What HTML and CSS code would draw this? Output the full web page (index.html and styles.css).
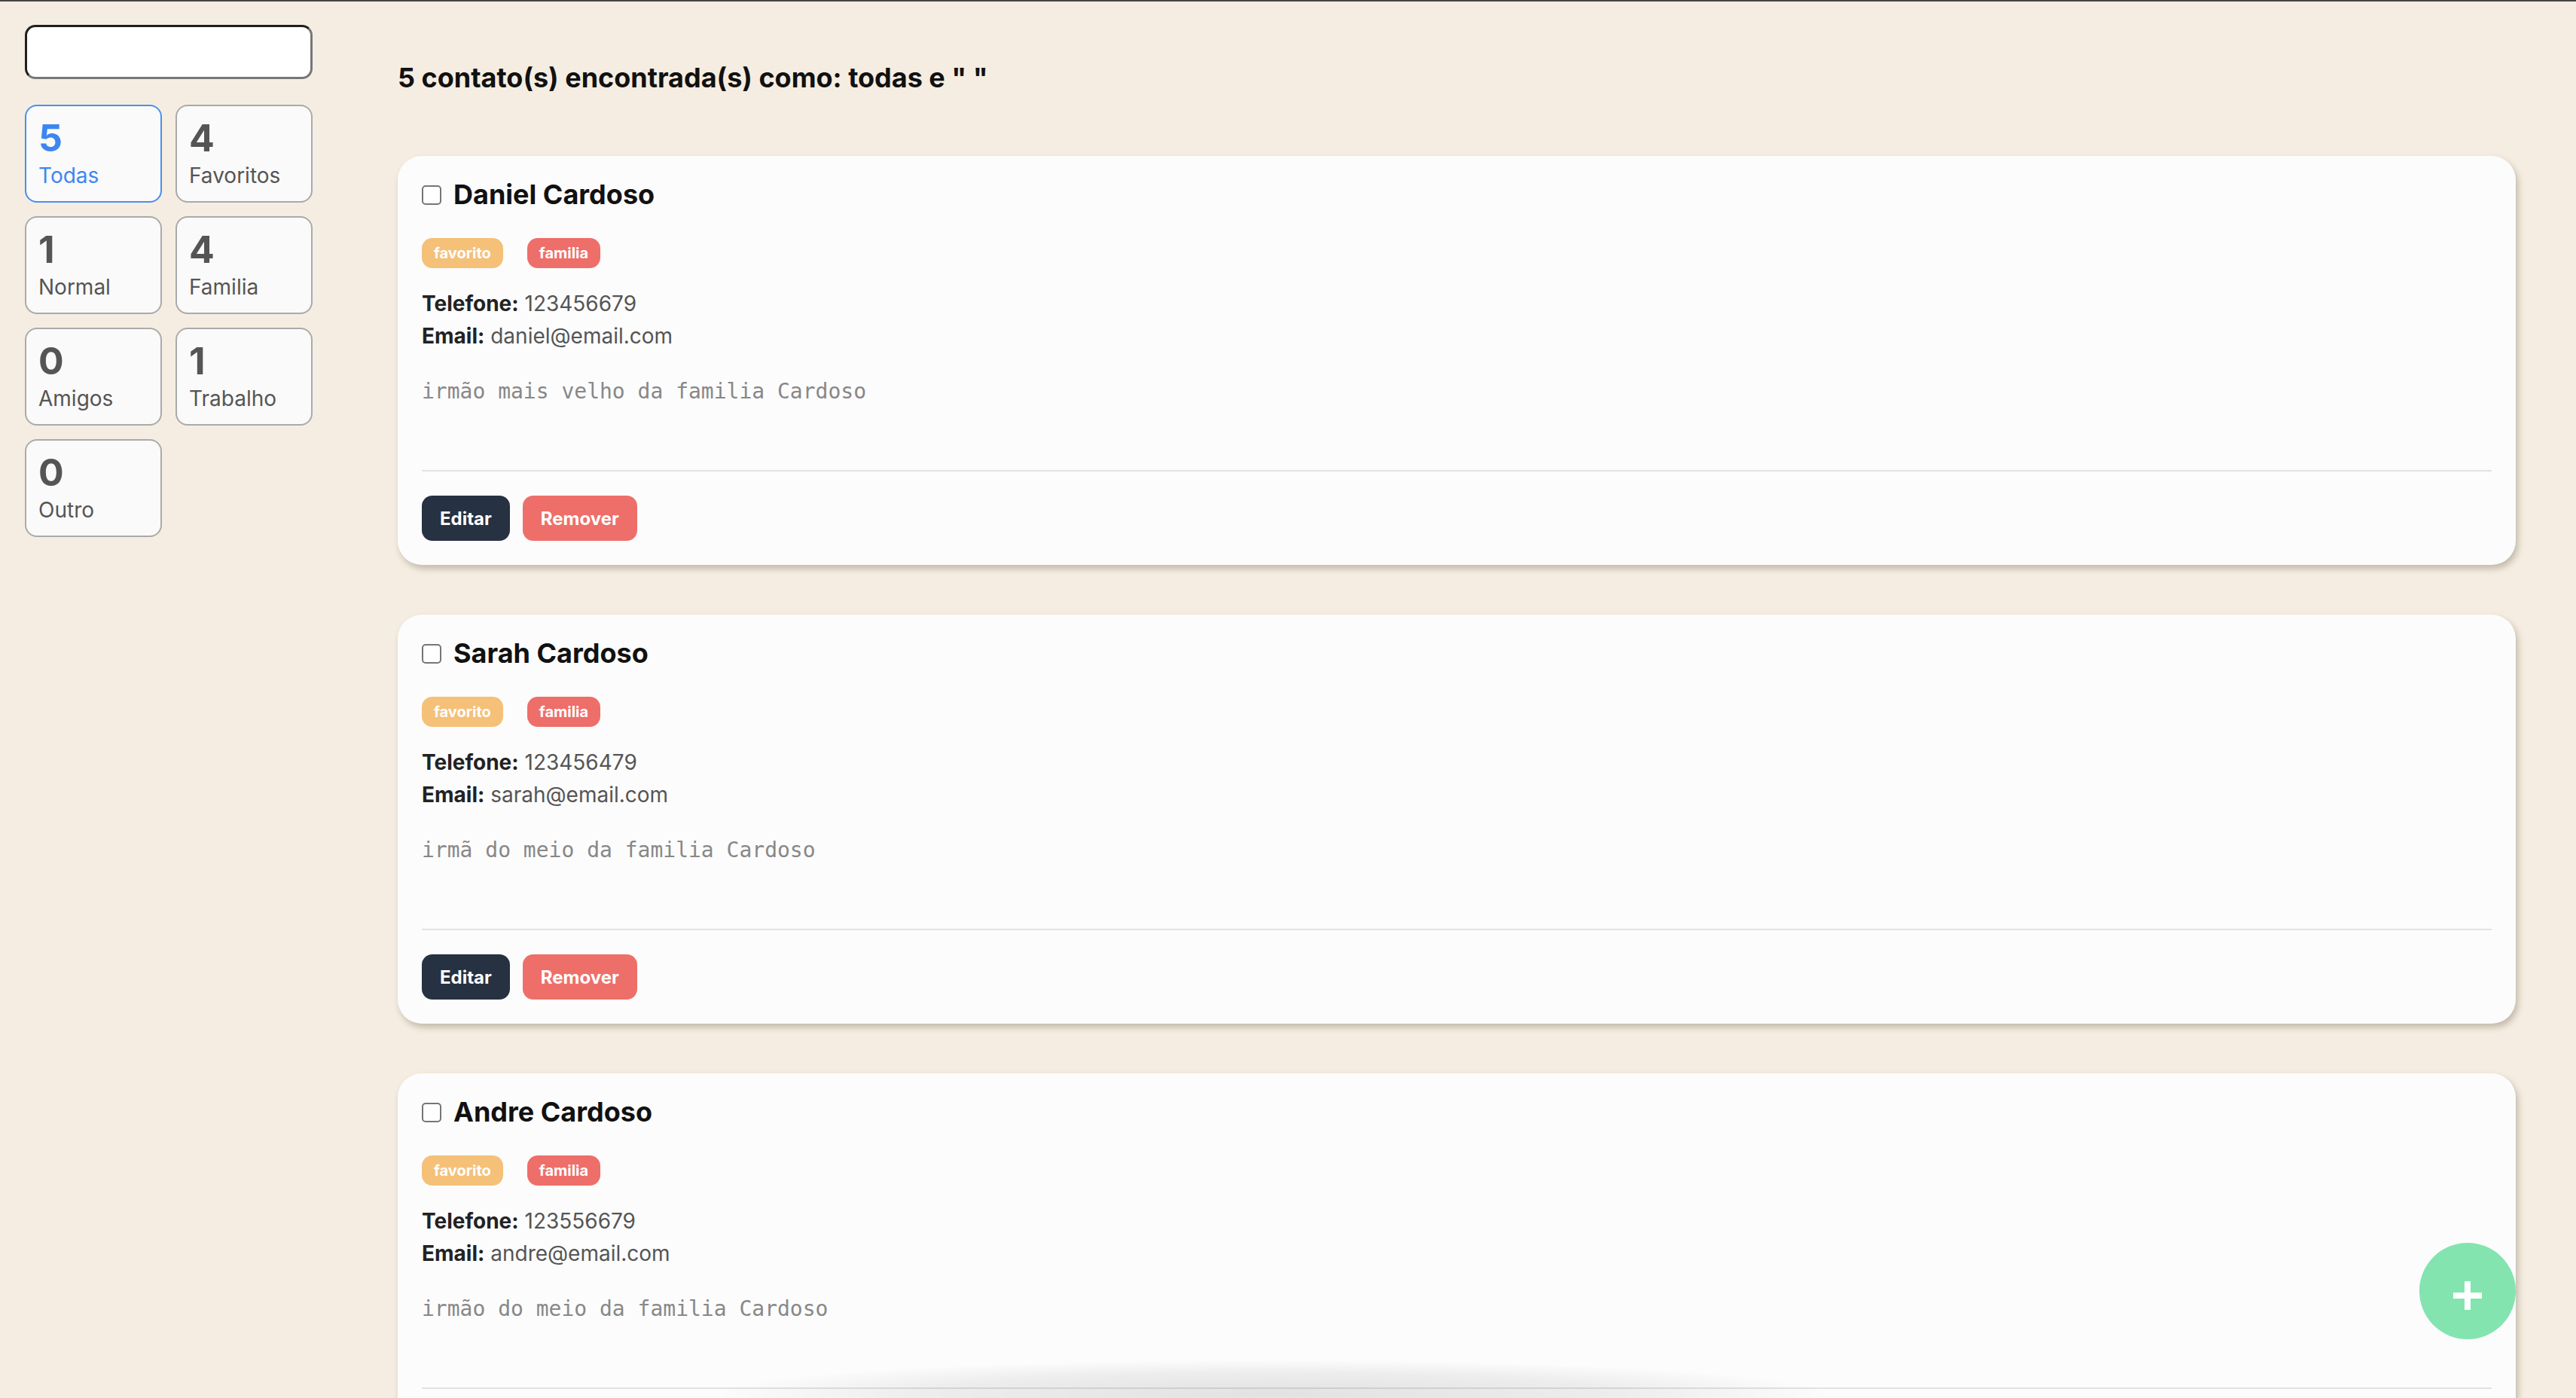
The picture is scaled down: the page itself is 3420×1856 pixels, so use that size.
FILE: index.html
```html
<!DOCTYPE html>
<html lang="pt">
<head>
<meta charset="utf-8">
<title>Contatos</title>
<link rel="stylesheet" href="styles.css">
</head>
<body>
<div class="app">
  <aside class="sidebar">
    <input class="search" type="text">
    <div class="stats">
      <div class="stat active"><span class="num">5</span><span class="lbl">Todas</span></div>
      <div class="stat"><span class="num">4</span><span class="lbl">Favoritos</span></div>
      <div class="stat"><span class="num">1</span><span class="lbl">Normal</span></div>
      <div class="stat"><span class="num">4</span><span class="lbl">Familia</span></div>
      <div class="stat"><span class="num">0</span><span class="lbl">Amigos</span></div>
      <div class="stat"><span class="num">1</span><span class="lbl">Trabalho</span></div>
      <div class="stat"><span class="num">0</span><span class="lbl">Outro</span></div>
    </div>
  </aside>
  <main class="main">
    <h2 class="title">5 contato(s) encontrada(s) como: todas e " "</h2>
    <ul class="list">
      <li class="card">
        <div class="name-row"><input type="checkbox" class="check"><h3 class="name">Daniel Cardoso</h3></div>
        <div class="tags"><span class="tag fav">favorito</span><span class="tag fam">familia</span></div>
        <p class="info"><b>Telefone:</b> 123456679</p>
        <p class="info"><b>Email:</b> daniel@email.com</p>
        <p class="desc">irmão mais velho da familia Cardoso</p>
        <hr class="divider">
        <div class="actions"><button class="btn edit">Editar</button><button class="btn remove">Remover</button></div>
      </li>
      <li class="card">
        <div class="name-row"><input type="checkbox" class="check"><h3 class="name">Sarah Cardoso</h3></div>
        <div class="tags"><span class="tag fav">favorito</span><span class="tag fam">familia</span></div>
        <p class="info"><b>Telefone:</b> 123456479</p>
        <p class="info"><b>Email:</b> sarah@email.com</p>
        <p class="desc">irmã do meio da familia Cardoso</p>
        <hr class="divider">
        <div class="actions"><button class="btn edit">Editar</button><button class="btn remove">Remover</button></div>
      </li>
      <li class="card">
        <div class="name-row"><input type="checkbox" class="check"><h3 class="name">Andre Cardoso</h3></div>
        <div class="tags"><span class="tag fav">favorito</span><span class="tag fam">familia</span></div>
        <p class="info"><b>Telefone:</b> 123556679</p>
        <p class="info"><b>Email:</b> andre@email.com</p>
        <p class="desc">irmão do meio da familia Cardoso</p>
        <hr class="divider">
        <div class="actions"><button class="btn edit">Editar</button><button class="btn remove">Remover</button></div>
      </li>
    </ul>
  </main>
</div>
<button class="fab" aria-label="Adicionar">
  <svg width="38" height="38" viewBox="0 0 38 38"><rect x="15" y="0" width="8" height="38" fill="#fff"/><rect x="0" y="15" width="38" height="8" fill="#fff"/></svg>
</button>
<div class="dock-shadow"></div>
</body>
</html>
```

FILE: styles.css
```css
* { box-sizing: border-box; }
html, body { margin: 0; padding: 0; }
body {
  background: #f5ede1;
  border-top: 2px solid #454545;
  font-family: Inter, "Noto Sans", sans-serif;
  color: #111;
  height: 100vh;
  overflow: hidden;
}
.app { display: flex; align-items: flex-start; }
.sidebar {
  width: 448px;
  flex: none;
  padding: 31px 33px;
  display: flex;
  flex-direction: column;
  gap: 34px;
}
.search {
  width: 382px;
  height: 72px;
  border-radius: 14px;
  border-style: solid;
  border-width: 3px;
  border-color: #1f1f1f #777 #777 #1f1f1f;
  background: #fff;
  outline: none;
}
.stats {
  display: grid;
  grid-template-columns: 182px 182px;
  column-gap: 18px;
  row-gap: 18px;
}
.stat {
  height: 130px;
  border: 2px solid #aaa;
  border-radius: 16px;
  background: #fafafa;
  padding: 17px 16px 0;
  display: flex;
  flex-direction: column;
  gap: 7px;
  color: #555;
}
.stat .num { font-size: 50px; font-weight: 700; line-height: 1; }
.stat .lbl { font-size: 28px; line-height: 36px; }
.stat.active { border-color: #4a8ff0; color: #3d86f2; }

.main { flex: 1; padding: 0 80px 0 80px; }
.title {
  margin: 80px 0 82px;
  font-size: 36px;
  font-weight: 700;
  line-height: 43px;
  color: #111;
}
.list { list-style: none; margin: 0; padding: 0; display: flex; flex-direction: column; gap: 66px; }
.card {
  background: #fcfcfc;
  border-radius: 32px;
  padding: 30px 32px 32px;
  box-shadow: 3px 5px 9px rgba(60, 50, 30, 0.28);
}
.name-row { display: flex; align-items: center; gap: 16px; height: 43px; }
.check {
  appearance: none;
  -webkit-appearance: none;
  width: 26px;
  height: 26px;
  margin: 0;
  border: 2px solid #767676;
  border-radius: 5px;
  background: #fff;
}
.name { margin: 0; font-size: 36px; font-weight: 700; line-height: 43px; color: #111; }
.tags { display: flex; gap: 32px; margin-top: 36px; }
.tag {
  height: 40px;
  line-height: 40px;
  padding: 0 16px;
  border-radius: 14px;
  color: #fff;
  font-size: 20px;
  font-weight: 700;
}
.tag.fav { background: #f5c078; }
.tag.fam { background: #ee6e69; }
.info { margin: 0; font-size: 28px; line-height: 43px; color: #555; }
.tags + .info { margin-top: 26px; }
.info b { color: #222; }
.desc {
  margin: 31px 0 0;
  font-family: "DejaVu Sans Mono", "Liberation Mono", monospace;
  font-size: 28px;
  line-height: 42px;
  color: #888;
}
.divider { border: 0; height: 2px; background: #e2e2e2; margin: 83px 0 32px; }
.actions { display: flex; gap: 17px; }
.btn {
  height: 60px;
  padding: 0 24px;
  border: 0;
  border-radius: 14px;
  color: #fff;
  font-family: Inter, sans-serif;
  font-size: 24px;
  font-weight: 700;
}
.btn.edit { background: #263142; }
.btn.remove { background: #ee6f69; }
.fab {
  position: fixed;
  right: 80px;
  bottom: 78px;
  width: 128px;
  height: 128px;
  border-radius: 50%;
  border: 0;
  background: #84e4b0;
  display: flex;
  align-items: center;
  justify-content: center;
  padding: 12px 0 0;
}
.dock-shadow {
  position: fixed;
  left: 960px;
  bottom: -40px;
  width: 1460px;
  height: 90px;
  border-radius: 50%;
  background: radial-gradient(ellipse at center, rgba(0,0,0,0.10) 0%, rgba(0,0,0,0.06) 45%, rgba(0,0,0,0) 72%);
  pointer-events: none;
}
```
